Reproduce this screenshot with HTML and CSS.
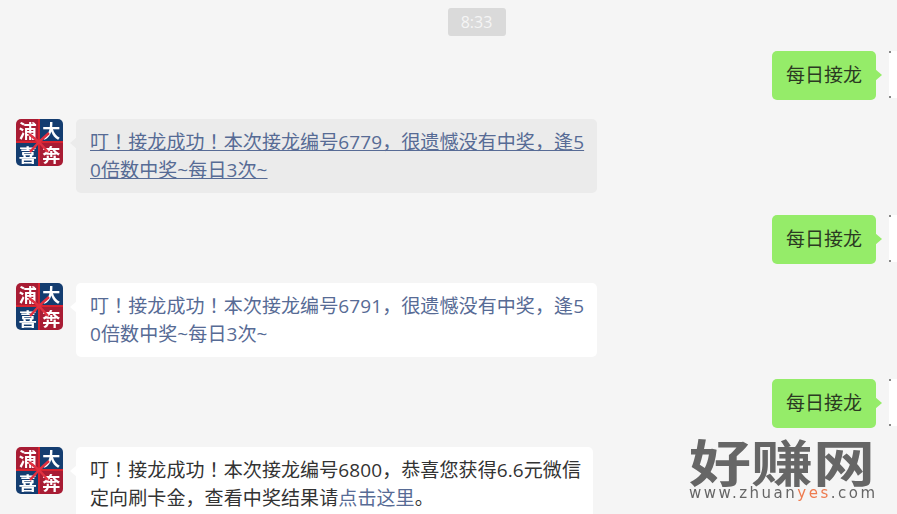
FILE: index.html
```html
<!DOCTYPE html>
<html lang="zh-CN">
<head>
    <meta charset="UTF-8">
    <meta name="viewport" content="width=device-width, initial-scale=1.0">
    <title>每日接龙</title>
    <link rel="stylesheet" href="styles.css">
</head>
<body>

    <div class="chat">
        <div class="time-row"><span class="time">8:33</span></div>

        <div class="row row-me">
            <div class="bubble-me">每日接龙</div>
            <div class="avatar-me"></div>
        </div>

        <div class="row row-bot">
            <div class="avatar">
                <span class="red">浦</span><span class="blue">大</span><span class="blue">喜</span><span class="red">奔</span>
                <svg class="ribbon" viewBox="0 0 47 47">
                    <path d="M23 0V47M0 23H47" stroke="#d8232f" stroke-width="2"/>
                    <path d="M23 23L13 15M23 23L33 14M23 23L14 33M23 23L32 33" stroke="#e03040" stroke-width="2.5"/>
                </svg>
            </div>
            <div class="bubble bubble-hover">
                <a class="link underline">叮！接龙成功！本次接龙编号6779，很遗憾没有中奖，逢50倍数中奖~每日3次~</a>
            </div>
        </div>

        <div class="row row-me">
            <div class="bubble-me">每日接龙</div>
            <div class="avatar-me"></div>
        </div>

        <div class="row row-bot">
            <div class="avatar">
                <span class="red">浦</span><span class="blue">大</span><span class="blue">喜</span><span class="red">奔</span>
                <svg class="ribbon" viewBox="0 0 47 47">
                    <path d="M23 0V47M0 23H47" stroke="#d8232f" stroke-width="2"/>
                    <path d="M23 23L13 15M23 23L33 14M23 23L14 33M23 23L32 33" stroke="#e03040" stroke-width="2.5"/>
                </svg>
            </div>
            <div class="bubble">
                <a class="link">叮！接龙成功！本次接龙编号6791，很遗憾没有中奖，逢50倍数中奖~每日3次~</a>
            </div>
        </div>

        <div class="row row-me">
            <div class="bubble-me">每日接龙</div>
            <div class="avatar-me"></div>
        </div>

        <div class="row row-bot">
            <div class="avatar">
                <span class="red">浦</span><span class="blue">大</span><span class="blue">喜</span><span class="red">奔</span>
                <svg class="ribbon" viewBox="0 0 47 47">
                    <path d="M23 0V47M0 23H47" stroke="#d8232f" stroke-width="2"/>
                    <path d="M23 23L13 15M23 23L33 14M23 23L14 33M23 23L32 33" stroke="#e03040" stroke-width="2.5"/>
                </svg>
            </div>
            <div class="bubble bubble-short">
                叮！接龙成功！本次接龙编号6800，恭喜您获得6.6元微信定向刷卡金，查看中奖结果请<a class="link">点击这里</a>。
            </div>
        </div>
    </div>

    <!-- 水印 -->
    <div class="watermark">
        <div class="wm-title">好赚网</div>
        <div class="wm-url">www.zhuan<span class="wm-yes">yes</span>.com</div>
    </div>

</body>
</html>
```

FILE: styles.css
```css
* {
    margin: 0;
    padding: 0;
    box-sizing: border-box;
}

html, body {
    height: 100%;
    overflow: hidden;
}

body {
    position: relative;
    font-family: "Open Sans", "Noto Sans CJK JP", sans-serif;
    font-feature-settings: "locl" 0;
    background-color: #f5f5f5;
    color: #333;
}

.chat {
    padding: 8px 0 0 16px;
    filter: blur(0.4px);
}

.time-row {
    display: flex;
    justify-content: center;
    padding-left: 40px;
    margin-bottom: 15px;
}

.time {
    width: 58px;
    height: 28px;
    line-height: 28px;
    text-align: center;
    font-size: 16px;
    color: #f5f5f5;
    background-color: #dadada;
    border-radius: 3px;
}

.row {
    display: flex;
}

.row-me {
    justify-content: flex-end;
    margin-right: -40px;
    height: 49px;
    margin-bottom: 19px;
}

.row-bot {
    gap: 13px;
    margin-bottom: 22px;
    height: 74px;
}

.bubble-me {
    position: relative;
    width: 104px;
    height: 49px;
    line-height: 48px;
    text-align: center;
    font-size: 19px;
    color: #2b3a22;
    background-color: #95ec69;
    border-radius: 5px;
    margin-right: 13px;
}

.bubble-me::after {
    content: "";
    position: absolute;
    top: 18px;
    right: -6px;
    border-left: 7px solid #95ec69;
    border-top: 6px solid transparent;
    border-bottom: 6px solid transparent;
}

.avatar-me {
    position: relative;
    width: 48px;
    height: 47px;
    background-color: #fff;
}

.avatar-me::before,
.avatar-me::after {
    content: "";
    position: absolute;
    left: 0;
    width: 2px;
    height: 2px;
    background-color: #888;
}

.avatar-me::before {
    top: 0;
}

.avatar-me::after {
    bottom: 0;
}

.avatar {
    position: relative;
    flex: none;
    display: grid;
    grid-template-columns: 1fr 1fr;
    grid-template-rows: 1fr 1fr;
    width: 47px;
    height: 47px;
    border-radius: 5px;
    overflow: hidden;
    font-family: "Noto Sans CJK SC", sans-serif;
    font-feature-settings: normal;
    font-size: 18px;
    font-weight: bold;
    line-height: 23px;
    text-align: center;
    color: #fff;
}

.avatar .red {
    background-color: #a81c34;
}

.avatar .blue {
    background-color: #143d70;
}

.ribbon {
    position: absolute;
    top: 0;
    left: 0;
    width: 47px;
    height: 47px;
}

.bubble {
    position: relative;
    width: 521px;
    height: 74px;
    padding: 9px 8px 9px 14px;
    font-size: 19px;
    line-height: 28px;
    letter-spacing: 0.1px;
    word-break: break-all;
    background-color: #fff;
    border-radius: 5px;
}

.bubble::before {
    content: "";
    position: absolute;
    top: 18px;
    left: -6px;
    border-right: 7px solid #fff;
    border-top: 6px solid transparent;
    border-bottom: 6px solid transparent;
}

.bubble-hover {
    background-color: #ebebeb;
}

.bubble-hover::before {
    border-right-color: #ebebeb;
}

.bubble-short {
    width: 517px;
}

.link {
    color: #576b95;
}

.underline {
    text-decoration: underline;
}

.watermark {
    position: absolute;
    left: 689px;
    top: 436px;
    width: 188px;
    color: #666;
    filter: blur(0.4px);
}

.wm-title {
    font-family: "Noto Sans CJK SC", sans-serif;
    font-feature-settings: normal;
    font-size: 50px;
    font-weight: bold;
    line-height: 48px;
    white-space: nowrap;
    transform: scaleX(1.24);
    transform-origin: left center;
}

.wm-url {
    margin-top: 2px;
    font-family: "DejaVu Sans", sans-serif;
    font-size: 15px;
    line-height: 14px;
    letter-spacing: 2.5px;
    white-space: nowrap;
}

.wm-yes {
    color: #ee7b4f;
}
```
